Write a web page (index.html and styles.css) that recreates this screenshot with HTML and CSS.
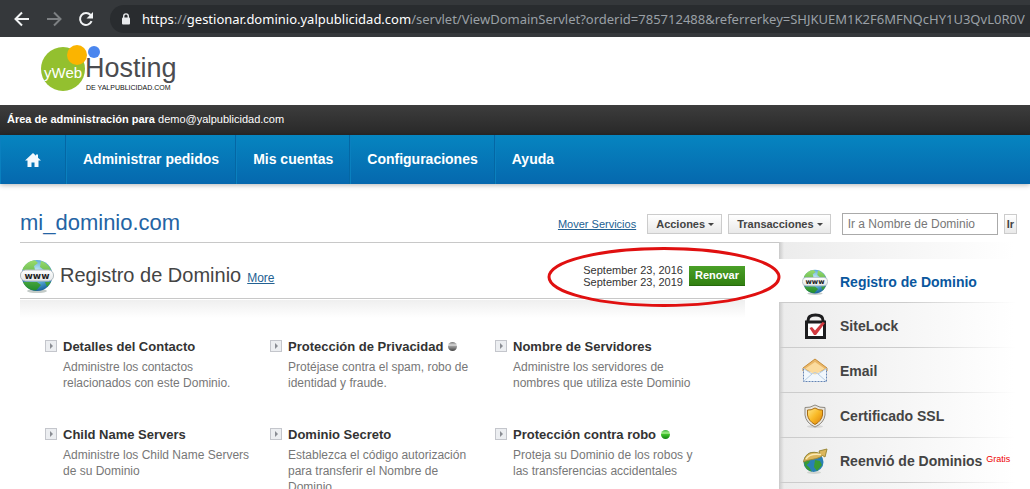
FILE: index.html
```html
<!DOCTYPE html>
<html lang="es">
<head>
    <meta charset="UTF-8">
    <title>mi_dominio.com</title>
    <link rel="stylesheet" href="styles.css">
</head>
<body>
    <!-- Barra del navegador -->
    <div class="browser">
        <button type="button" class="browser-btn" aria-label="Atrás">
            <svg width="16" height="16" viewBox="0 0 16 16"><path d="M15 8H2M8 1.5L1.5 8L8 14.5" fill="none" stroke="#f1f3f4" stroke-width="2"/></svg>
        </button>
        <button type="button" class="browser-btn" aria-label="Adelante">
            <svg width="16" height="16" viewBox="0 0 16 16"><path d="M1 8H14M8 1.5L14.5 8L8 14.5" fill="none" stroke="#7d8083" stroke-width="2"/></svg>
        </button>
        <button type="button" class="browser-btn" aria-label="Recargar">
            <svg width="16" height="16" viewBox="0 0 16 16"><path d="M13.6 10.2A6 6 0 1 1 12.6 4" fill="none" stroke="#f1f3f4" stroke-width="2"/><path d="M15 1v6.500H8.500z" fill="#f1f3f4"/></svg>
        </button>
        <div class="address">
            <svg class="lock" width="10" height="12" viewBox="0 0 10 12"><path d="M2.700 5V3.200a2.300 2.300 0 0 1 4.600 0V5" fill="none" stroke="#e8eaed" stroke-width="1.400"/><rect x="1" y="4.500" width="8" height="7" rx="1" fill="#e8eaed"/></svg>
            <span class="url"><span class="host">https<span class="dim">://</span>gestionar.dominio.yalpublicidad.com</span>/servlet/ViewDomainServlet?orderid=785712488&amp;referrerkey=SHJKUEM1K2F6MFNQcHY1U3QvL0R0V</span>
        </div>
    </div>

    <header class="logo-bar">
        <svg width="140" height="50" viewBox="0 0 140 50" role="img" aria-label="yWeb Hosting">
            <circle cx="23" cy="25" r="22" fill="#93c02f"/>
            <circle cx="37" cy="11" r="10" fill="#fbb400"/>
            <circle cx="54" cy="8" r="6" fill="#4a86ee"/>
            <text x="4" y="34" class="logo-web">yWeb</text>
            <text x="45" y="33" class="logo-host">Hosting</text>
            <text x="46" y="46" class="logo-sub">DE YALPUBLICIDAD.COM</text>
        </svg>
    </header>

    <div class="admin-bar"><b>Área de administración para</b> demo@yalpublicidad.com</div>

    <nav class="menu">
        <a href="#" class="home" aria-label="Inicio">
            <svg width="16" height="14" viewBox="0 0 16 14"><path d="M8 0L0 7.500H2.500V14H6.500V9.500H9.500V14H13.500V7.500H16L13 4.700V1.500H11V2.800z" fill="#f4f9fd"/></svg>
        </a>
        <a href="#">Administrar pedidos</a>
        <a href="#">Mis cuentas</a>
        <a href="#">Configuraciones</a>
        <a href="#">Ayuda</a>
    </nav>

    <div class="title-bar">
        <h1>mi_dominio.com</h1>
        <form class="tools">
            <a href="#" class="link">Mover Servicios</a>
            <button type="button" class="btn">Acciones <span class="caret"></span></button>
            <button type="button" class="btn">Transacciones <span class="caret"></span></button>
            <input type="text" class="search" placeholder="Ir a Nombre de Dominio" aria-label="Ir a Nombre de Dominio">
            <button type="button" class="btn go">Ir</button>
        </form>
    </div>

    <div class="content">
        <main>
            <div class="section-head">
                <svg width="34" height="34" viewBox="0 0 34 34">
                    <defs>
                        <radialGradient id="sea" cx="50%" cy="35%" r="65%"><stop offset="0" stop-color="#c9ecf7"/><stop offset=".6" stop-color="#55a5d2"/><stop offset="1" stop-color="#17609b"/></radialGradient>
                        <linearGradient id="land" x1="0" y1="0" x2="0" y2="1"><stop offset="0" stop-color="#9bdc6c"/><stop offset="1" stop-color="#228c2b"/></linearGradient>
                        <linearGradient id="band" x1="0" y1="0" x2="0" y2="1"><stop offset="0" stop-color="#fff"/><stop offset="1" stop-color="#e4e7e9"/></linearGradient>
                    </defs>
                    <g id="globe">
                        <ellipse cx="17" cy="32" rx="10" ry="2" fill="#c4cbc8"/>
                        <circle cx="17" cy="16.500" r="15.500" fill="url(#sea)"/>
                        <path d="M3 9C6 4 10 1.500 15 1.200L18 4L14 7L15 11H2.500zM21 2C27 4 30 8 31 11H24L20 8zM3 23H17L21 26L16 31.500C9 31 5 28 3 23zM25 23H31L27 28z" fill="url(#land)"/>
                        <rect x="0.500" y="11" width="33" height="11" rx="5" fill="url(#band)" stroke="#b3bcc0"/>
                        <text x="17" y="20" text-anchor="middle" class="www">www</text>
                    </g>
                </svg>
                <h2>Registro de Dominio</h2>
                <a href="#" class="link more">More</a>
                <div class="renew">
                    <div class="dates">September 23, 2016<br>September 23, 2019</div>
                    <button type="button" class="btn-green">Renovar</button>
                    <svg class="mark" viewBox="0 0 234 62"><ellipse cx="117" cy="31" rx="115" ry="28.500" fill="none" stroke="#e01010" stroke-width="3"/></svg>
                </div>
            </div>

            <div class="options">
                <div class="option">
                    <h3><a href="#">Detalles del Contacto</a></h3>
                    <p>Administre los contactos relacionados con este Dominio.</p>
                </div>
                <div class="option">
                    <h3><a href="#">Protección de Privacidad</a><span class="dot"></span></h3>
                    <p>Protéjase contra el spam, robo de identidad y fraude.</p>
                </div>
                <div class="option">
                    <h3><a href="#">Nombre de Servidores</a></h3>
                    <p>Administre los servidores de nombres que utiliza este Dominio</p>
                </div>
                <div class="option">
                    <h3><a href="#">Child Name Servers</a></h3>
                    <p>Administre los Child Name Servers de su Dominio</p>
                </div>
                <div class="option">
                    <h3><a href="#">Dominio Secreto</a></h3>
                    <p>Establezca el código autorización para transferir el Nombre de Dominio</p>
                </div>
                <div class="option">
                    <h3><a href="#">Protección contra robo</a><span class="dot on"></span></h3>
                    <p>Proteja su Dominio de los robos y las transferencias accidentales</p>
                </div>
            </div>
        </main>

        <aside class="side">
            <a href="#" class="active">
                <svg width="26" height="26" viewBox="0 0 34 34"><use href="#globe"/></svg>
                Registro de Dominio
            </a>
            <a href="#">
                <svg width="26" height="26" viewBox="0 0 26 26"><path d="M6 9V7.500C6 4 9 2 13.500 2S21 4 21 7.500V9" fill="none" stroke="#1d1d1f" stroke-width="3"/><rect x="4.500" y="9" width="18" height="15.500" fill="#fff" stroke="#1d1d1f" stroke-width="3"/><path d="M7.500 15L10 14L13 17.500L20.500 9L23 10L14 22H12z" fill="#d2393f"/></svg>
                SiteLock
            </a>
            <a href="#">
                <svg width="26" height="26" viewBox="0 0 26 26"><path d="M1 10L13 1L25 10V13H1z" fill="#eab768" stroke="#c78e3a"/><path d="M3.500 10.500L13 4L22.500 10.500L13 17z" fill="#fbdb9e"/><path d="M1.500 10.500L11 16.500H15L24.500 10.500V23.500H1.500z" fill="#f1f7fc"/><path d="M1.500 10.500V23.500H24.500V10.500" fill="none" stroke="#6484b4" stroke-dasharray="2 1"/><path d="M2 23L10.500 15.500Q13 13.500 15.500 15.500L24 23M1.500 10.500L10 16M24.500 10.500L16 16" fill="none" stroke="#b5cce3"/></svg>
                Email
            </a>
            <a href="#">
                <svg width="26" height="26" viewBox="0 0 26 26"><defs><linearGradient id="gold" x1="0" y1="0" x2="1" y2="1"><stop offset="0" stop-color="#ffe88a"/><stop offset=".5" stop-color="#f9b926"/><stop offset="1" stop-color="#d97d0b"/></linearGradient></defs><ellipse cx="13" cy="23.500" rx="8" ry="1.500" fill="#d5d5d5"/><path d="M13 2Q18 5 23 4.500V12Q22 20 13 24Q4 20 3 12V4.500Q8 5 13 2z" fill="#e9e6df" stroke="#8e8a82"/><path d="M13 5Q17 7.500 20.500 7V12Q19.500 18 13 21.500Q6.500 18 5.500 12V7Q9 7.500 13 5z" fill="url(#gold)" stroke="#a96c12"/></svg>
                Certificado SSL
            </a>
            <a href="#">
                <svg width="26" height="26" viewBox="0 0 26 26"><ellipse cx="12" cy="24.500" rx="7" ry="1.500" fill="#d0d4d0"/><circle cx="11.500" cy="14" r="10" fill="#2a7fb5"/><path d="M2 12C4 6 8 4 13 4.200L14 8L9 10L7 15L3 18zM13 12L18 13L20 17L15 23L12 19zM2 15L7 19L10 23.800Q3 22 2 15z" fill="#399b34"/><path d="M1.500 14C3 5 10 2.500 18 5.500L17 3L25 1L23 9L20.500 7.500C15 12 7 11 1.500 14z" fill="#dcb65c" stroke="#9c8a3a"/><path d="M4 11C7 6 12 5.500 19 6.500" fill="none" stroke="#fbebb5" stroke-width="1.500"/></svg>
                <span>Reenvió de Dominios <span class="free">Gratis</span></span>
            </a>
            <div class="side-rest"></div>
        </aside>
    </div>
</body>
</html>
```

FILE: styles.css
```css
*, *::before, *::after {
    box-sizing: border-box;
}
body {
    margin: 0;
    background-color: #fff;
    color: #444;
    font-family: "Liberation Sans", Arial, sans-serif;
    font-size: 12px;
    overflow-x: hidden;
}
h1, h2, h3, p {
    margin: 0;
    font-weight: normal;
}
a {
    color: inherit;
    text-decoration: none;
}
button, input {
    font-family: inherit;
}

/* Barra del navegador */
.browser {
    display: flex;
    align-items: center;
    gap: 16px;
    height: 37px;
    padding-left: 14px;
    background-color: #35383b;
}
.browser-btn {
    display: flex;
    padding: 0;
    border: 0;
    background: none;
}
.address {
    display: flex;
    flex: 1;
    align-items: center;
    gap: 11px;
    min-width: 0;
    height: 28px;
    padding-left: 11px;
    border-radius: 14px 0 0 14px;
    background-color: #292c2f;
}
.lock {
    flex: none;
}
.url {
    overflow: hidden;
    color: #9aa0a6;
    font-family: "Noto Sans", "Open Sans", sans-serif;
    font-size: 13px;
    white-space: nowrap;
}
.host {
    color: #fff;
}
.dim {
    color: #9aa0a6;
}

/* Cabecera */
.logo-bar {
    height: 68px;
    padding: 7px 40px;
}
.logo-web {
    fill: #fff;
    font-size: 15px;
}
.logo-host {
    fill: #4b4c50;
    font-size: 27px;
}
.logo-sub {
    fill: #111;
    font-size: 7px;
}
.admin-bar {
    height: 30px;
    padding-left: 7px;
    background: linear-gradient(#3d3d3d, #282828);
    color: #fff;
    font-size: 11px;
    line-height: 29px;
}
.menu {
    display: flex;
    height: 49px;
    background: linear-gradient(#0685c0, #0568ae);
    box-shadow: 0 1px 5px rgba(0, 0, 0, 0.3);
    color: #fff;
    font-size: 14px;
    font-weight: bold;
    line-height: 49px;
}
.menu a {
    padding: 0 16px;
    border-right: 1px solid #0467a4;
    border-left: 1px solid #0a80bf;
}
.menu a:last-child {
    border-right: 0;
}
.menu .home {
    display: flex;
    align-items: center;
    padding: 0 24px;
}

/* Titulo del dominio */
.title-bar {
    display: flex;
    align-items: center;
    justify-content: space-between;
    height: 58px;
    padding: 21px 13px 0 20px;
}
h1 {
    color: #2464a4;
    font-size: 22px;
    line-height: 24px;
    padding-bottom: 2px;
}
.tools {
    display: flex;
    align-items: center;
    gap: 6px;
}
.link {
    color: #236192;
    font-size: 11px;
    text-decoration: underline;
}
.tools .link {
    margin-right: 5px;
}
.btn {
    height: 20px;
    padding: 0 7px 0 8px;
    border: 1px solid #ccc;
    background: linear-gradient(#fff, #e9e9e9);
    color: #444;
    font-size: 11px;
    font-weight: bold;
}
.caret {
    display: inline-block;
    border: 3px solid transparent;
    border-top-color: #444;
    border-bottom: 0;
    vertical-align: middle;
}
.search {
    width: 156px;
    height: 22px;
    margin-left: 5px;
    padding: 0 5px;
    border: 1px solid #aaa;
    font-size: 12px;
}
.search::placeholder {
    color: #777;
}
.go {
    padding: 0 2px;
}

/* Contenido */
.content {
    display: flex;
}
main {
    flex: 1;
    padding-left: 20px;
}
.section-head {
    display: flex;
    align-items: center;
    height: 56px;
    padding: 10px 34px 0 0;
    border-top: 1px solid #c8c8c8;
}
.www {
    fill: #222;
    font-family: "DejaVu Sans", sans-serif;
    font-size: 9px;
    font-weight: bold;
}
h2 {
    margin-left: 6px;
    color: #444;
    font-size: 20px;
}
.more {
    margin: 4px 0 0 6px;
    font-size: 12px;
}
.renew {
    position: relative;
    display: flex;
    align-items: center;
    gap: 6px;
    margin-left: auto;
}
.dates {
    color: #333;
    font-size: 11px;
    line-height: 12px;
}
.btn-green {
    height: 20px;
    padding: 0 6px;
    border: 0;
    border-bottom: 1px solid #26690c;
    background: linear-gradient(#4aa028, #328010);
    color: #fff;
    font-size: 11px;
    font-weight: bold;
}
.mark {
    position: absolute;
    top: -18px;
    left: -36px;
    width: 234px;
    height: 62px;
    pointer-events: none;
}
.options {
    display: grid;
    grid-template-columns: repeat(3, 225px);
    row-gap: 34px;
    margin-right: 34px;
    padding: 38px 0 20px 25px;
    border-top: 1px solid #c8c8c8;
    background: linear-gradient(#efefef, #fff) 0 1px / 100% 18px no-repeat;
}
.option {
    padding: 0 14px 0 18px;
}
h3 {
    position: relative;
    display: flex;
    align-items: center;
    gap: 5px;
    height: 18px;
    margin-bottom: 4px;
    color: #333;
    font-size: 13px;
    font-weight: bold;
}
h3::before {
    position: absolute;
    left: -18px;
    width: 12px;
    height: 12px;
    border: 1px solid #c4c6cc;
    background: #eceef1;
    content: "";
}
h3::after {
    position: absolute;
    left: -13px;
    border: 3px solid transparent;
    border-left: 3px solid #8a8d94;
    border-right: 0;
    content: "";
}
.dot {
    width: 9px;
    height: 9px;
    border-radius: 50%;
    background: linear-gradient(#777, #ddd 35%, #999 50%, #444);
}
.dot.on {
    background: linear-gradient(#3cb43c, #a5ef8c 35%, #3fc12c 50%, #128212);
}
.option p {
    min-height: 32px;
    color: #777;
    font-size: 12px;
    line-height: 16px;
}

/* Menu lateral */
.side {
    display: flex;
    flex-direction: column;
    width: 251px;
    padding-top: 17px;
    background: linear-gradient(90deg, #c9c9c9, #ececec 5px, #f1f1f1 60px, #fff 235px);
}
.side a {
    display: flex;
    align-items: center;
    gap: 12px;
    height: 45px;
    padding: 2px 0 0 23px;
    border-bottom: 1px solid;
    border-image: linear-gradient(90deg, #ccc 50%, #fff 94%) 1;
    font-size: 14px;
    font-weight: bold;
    white-space: nowrap;
}
.side .active {
    height: 44px;
    background-color: #fff;
    color: #0a579e;
}
.free {
    color: #e00;
    font-size: 9px;
    font-weight: normal;
    vertical-align: 4px;
}
.side-rest {
    flex: 1;
}
```
